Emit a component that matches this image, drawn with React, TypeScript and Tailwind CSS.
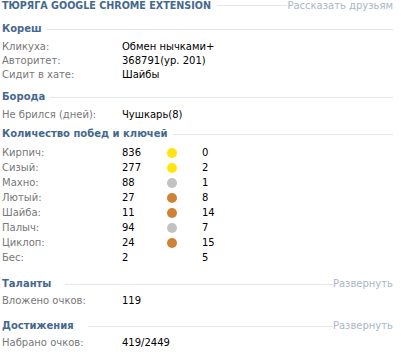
import React from 'react';

const font = { fontFamily: "Tahoma, 'DejaVu Sans', sans-serif" };

const gold = 'bg-[#ffe40d]';
const silver = 'bg-[#c2c2c2]';
const bronze = 'bg-[#cf8136]';

const stats: { name: string; wins: string; medal: string | null; keys: string }[] = [
  { name: 'Кирпич:', wins: '836', medal: gold, keys: '0' },
  { name: 'Сизый:', wins: '277', medal: gold, keys: '2' },
  { name: 'Махно:', wins: '88', medal: silver, keys: '1' },
  { name: 'Лютый:', wins: '27', medal: bronze, keys: '8' },
  { name: 'Шайба:', wins: '11', medal: bronze, keys: '14' },
  { name: 'Палыч:', wins: '94', medal: silver, keys: '7' },
  { name: 'Циклоп:', wins: '24', medal: bronze, keys: '15' },
  { name: 'Бес:', wins: '2', medal: null, keys: '5' },
];

const Header: React.FC<{ title: string; action?: string; className?: string }> = ({ title, action, className }) => (
  <div className={`flex items-center h-[14px] leading-[14px] ${className ?? ''}`}>
    <span className="font-bold text-[#45688e] text-[10px] whitespace-nowrap">{title}</span>
    {action ? (
      <>
        <div className="flex-1 h-px bg-[#e3e7ec] ml-[14px]" />
        <span className="text-[#a9b6c6] text-[10px] whitespace-nowrap">{action}</span>
      </>
    ) : (
      <div className="flex-1 h-px bg-[#e3e7ec] ml-[5px]" />
    )}
  </div>
);

const Row: React.FC<{ label: string; value: string }> = ({ label, value }) => (
  <div className="flex h-[14px] leading-[14px] text-[10px]">
    <span className="w-[120px] text-[#777777]">{label}</span>
    <span className="text-black whitespace-nowrap">{value}</span>
  </div>
);

export default function App() {
  return (
    <div className="w-[401px] h-[360px] bg-white pl-[2px] pr-[8px]" style={font}>
      <div className="flex items-center h-[11px] leading-[11px]">
        <span className="font-bold text-[#45688e] text-[9.6px] whitespace-nowrap">ТЮРЯГА GOOGLE CHROME EXTENSION</span>
        <div className="flex-1 h-px bg-[#e3e7ec] ml-[6px]" />
        <span className="text-[#a9b6c6] text-[10px] whitespace-nowrap">Рассказать друзьям</span>
      </div>

      <Header title="Кореш" className="mt-[11px]" />
      <div className="mt-[4px]">
        <Row label="Кликуха:" value="Обмен нычками+" />
        <Row label="Авторитет:" value="368791(ур. 201)" />
        <Row label="Сидит в хате:" value="Шайбы" />
      </div>

      <Header title="Борода" className="mt-[8px]" />
      <div className="mt-[4px]">
        <Row label="Не брился (дней):" value="Чушкарь(8)" />
      </div>

      <Header title="Количество побед и ключей" className="mt-[5px]" />
      <div className="mt-[4px]">
        {stats.map((s) => (
          <div key={s.name} className="flex items-center h-[15px] leading-[15px] text-[10px]">
            <span className="w-[120px] text-[#777777]">{s.name}</span>
            <span className="w-[45px] text-black">{s.wins}</span>
            <span className="w-[35px] flex">
              {s.medal && <span className={`w-[10px] h-[10px] rounded-full ${s.medal}`} />}
            </span>
            <span className="text-black">{s.keys}</span>
          </div>
        ))}
      </div>

      <Header title="Таланты" action="Развернуть" className="mt-[12px]" />
      <div className="mt-[3px]">
        <Row label="Вложено очков:" value="119" />
      </div>

      <Header title="Достижения" action="Развернуть" className="mt-[11px]" />
      <div className="mt-[3px]">
        <Row label="Набрано очков:" value="419/2449" />
      </div>
    </div>
  );
}
